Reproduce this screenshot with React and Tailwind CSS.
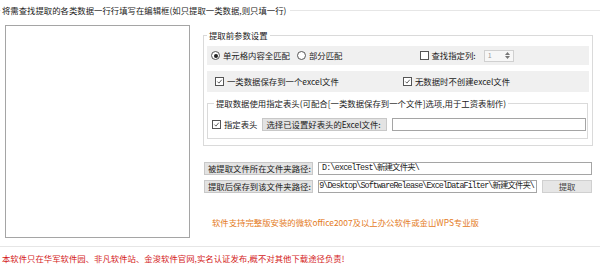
import React from "react";

function Check({ checked }) {
  return (
    <span className="inline-flex h-[9px] w-[9px] shrink-0 items-center justify-center border border-[#555] bg-white">
      {checked && (
        <svg viewBox="0 0 9 9" className="h-[9px] w-[9px]">
          <path d="M1.8 4.6 L3.8 6.6 L7.4 2.2" fill="none" stroke="#333" strokeWidth="1" />
        </svg>
      )}
    </span>
  );
}

function Radio({ checked }) {
  return (
    <span className="inline-flex h-[9px] w-[9px] shrink-0 items-center justify-center rounded-full border border-[#555] bg-white">
      {checked && <span className="h-[4px] w-[4px] rounded-full bg-[#222]" />}
    </span>
  );
}

export default function App() {
  return (
    <div className="h-[264px] w-[600px] overflow-hidden bg-white font-['Noto_Sans_CJK_SC','Noto_Sans',sans-serif] text-[8.4px] text-[#222] whitespace-nowrap">
      <fieldset className="h-[247px] border-t border-b border-[#e6e6e6]">
        <legend className="ml-[1px] h-[20px] pr-[4px] pl-[1px] leading-[20px]">
          将需查找提取的各类数据一行行填写在编辑框(如只提取一类数据,则只填一行)
        </legend>

        <div className="flex pl-[5px] pt-[5px]">
          <div className="h-[213px] w-[185px] shrink-0 border border-[#a5a5a5] bg-white" />

          <div className="ml-[13px] w-[390px]">
            <fieldset className="h-[121px] border border-[#dadada] px-[3px]">
              <legend className="h-[20px] px-[2px] leading-[20px]">提取前参数设置</legend>

              <div className="mt-[1px] flex h-[19px] items-center bg-[#f0f0f0] pl-[4px]">
                <Radio checked />
                <span className="ml-[3px]">单元格内容全匹配</span>
                <span className="ml-[7px] flex items-center">
                  <Radio />
                  <span className="ml-[3px]">部分匹配</span>
                </span>
                <span className="ml-[77px] flex items-center">
                  <Check />
                  <span className="ml-[3px]">查找指定列:</span>
                </span>
                <span className="ml-[8px] flex h-[12px] w-[30px] items-center justify-between border border-[#d0d0d0] bg-[#f7f7f7] px-[3px] text-[#9a9a9a]">
                  <span className="text-[7px]">1</span>
                  <span className="flex flex-col leading-none">
                    <svg viewBox="0 0 5 3" className="h-[3px] w-[5px]"><path d="M0 3 L2.5 0 L5 3 Z" fill="#777" /></svg>
                    <svg viewBox="0 0 5 3" className="mt-[1px] h-[3px] w-[5px]"><path d="M0 0 L2.5 3 L5 0 Z" fill="#777" /></svg>
                  </span>
                </span>
              </div>

              <div className="mt-[6px] flex h-[21px] items-center bg-[#f0f0f0] pl-[8px]">
                <span className="flex w-[188px] items-center">
                  <Check checked />
                  <span className="ml-[3px]">一类数据保存到一个excel文件</span>
                </span>
                <span className="flex items-center">
                  <Check checked />
                  <span className="ml-[3px]">无数据时不创建excel文件</span>
                </span>
              </div>

              <fieldset className="mt-[1px] mr-[1px] h-[46px] border border-[#dadada] pr-[1px] pl-[4px]">
                <legend className="ml-[2px] h-[20px] px-[2px] leading-[20px]">
                  提取数据使用指定表头(可配合[一类数据保存到一个文件]选项,用于工资表制作)
                </legend>
                <div className="mt-[5px] flex h-[13px] items-center">
                  <Check checked />
                  <span className="ml-[3px]">指定表头</span>
                  <span className="ml-[4px] flex h-[13px] w-[125px] shrink-0 items-center overflow-hidden border border-[#c8c8c8] bg-[#e3e3e3] pl-[4px]">
                    选择已设置好表头的Excel文件:
                  </span>
                  <span className="ml-[5px] h-[13px] flex-1 border border-[#a5a5a5] bg-white" />
                </div>
              </fieldset>
            </fieldset>

            <div className="mt-[16px] flex h-[13px] items-center">
              <span className="ml-[1px] flex h-[13px] w-[109px] shrink-0 items-center overflow-hidden border border-[#c8c8c8] bg-[#e3e3e3] pl-[3px]">
                被提取文件所在文件夹路径:
              </span>
              <span className="ml-[5px] flex h-[13px] w-[274px] items-center overflow-hidden border border-[#a5a5a5] bg-white pl-[3px] font-['Liberation_Mono','Noto_Sans_CJK_SC',monospace] tracking-[-0.8px]">
                D:\excelTest\新建文件夹\
              </span>
            </div>

            <div className="mt-[5px] flex h-[13px] items-center">
              <span className="ml-[1px] flex h-[13px] w-[109px] shrink-0 items-center overflow-hidden border border-[#c8c8c8] bg-[#e3e3e3] pl-[3px]">
                提取后保存到该文件夹路径:
              </span>
              <span className="ml-[5px] flex h-[13px] w-[219px] items-center justify-end overflow-hidden border border-[#a5a5a5] bg-white pr-[2px] font-['Liberation_Mono','Noto_Sans_CJK_SC',monospace] tracking-[-0.9px]">
                <span className="shrink-0">9\Desktop\SoftwareRelease\ExcelDataFilter\新建文件夹\</span>
              </span>
              <span className="ml-[5px] flex h-[13px] w-[50px] items-center justify-center border border-[#d0d0d0] bg-[#e6e6e6] text-[#444]">
                提取
              </span>
            </div>

            <div className="mt-[23px] ml-[9px] leading-[12px] text-[#e47b24]">
              软件支持完整版安装的微软office2007及以上办公软件或金山WPS专业版
            </div>
          </div>
        </div>
      </fieldset>

      <div className="mt-[5px] pl-[2px] leading-[12px] text-[#d41a1a]">
        本软件只在华军软件园、非凡软件站、金浚软件官网,实名认证发布,概不对其他下载途径负责!
      </div>
    </div>
  );
}
